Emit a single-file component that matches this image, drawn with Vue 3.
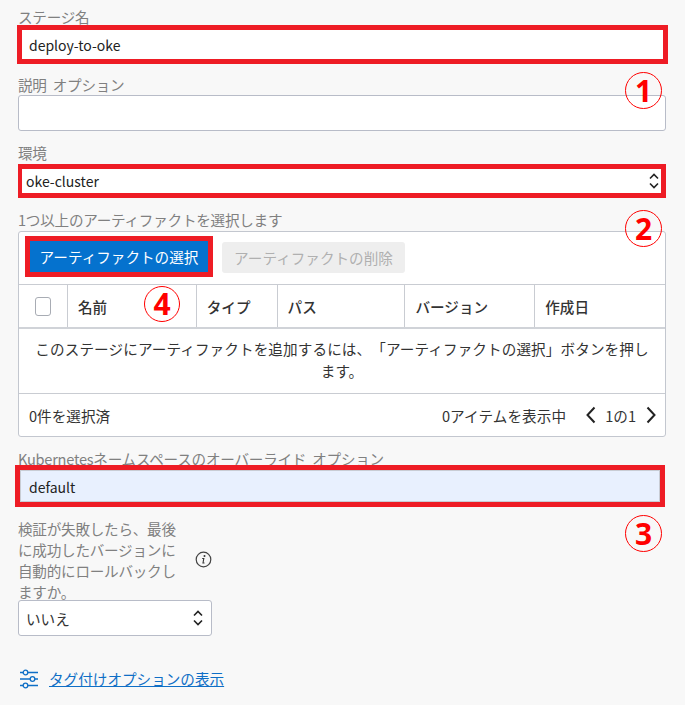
<script setup>
const columns = [
  { label: '名前', width: 129 },
  { label: 'タイプ', width: 81 },
  { label: 'パス', width: 128 },
  { label: 'バージョン', width: 130 },
  { label: '作成日', width: 131 },
]
</script>

<template>
  <main class="page">
    <div class="label">ステージ名</div>
    <div class="mark mark-name"><div class="value">deploy-to-oke</div></div>

    <div class="label l-desc">説明&nbsp; オプション</div>
    <div class="textarea"></div>
    <span class="num n1">1</span>

    <div class="label l-env">環境</div>
    <div class="mark mark-env">
      <div class="value env">oke-cluster</div>
      <svg class="updown" width="12" height="18" viewBox="0 0 12 18"><path d="M2 6.500 6 2.500l4 4M2 11.500l4 4 4-4" fill="none" stroke="#222" stroke-width="1.600"/></svg>
    </div>

    <div class="label l-art">1つ以上のアーティファクトを選択します</div>
    <section class="panel">
      <div class="toolbar">
        <div class="btn-mark"><button class="btn primary">アーティファクトの選択</button></div>
        <button class="btn disabled">アーティファクトの削除</button>
      </div>
      <div class="thead">
        <div class="th check"><span class="box"></span></div>
        <div v-for="c in columns" :key="c.label" class="th" :style="{ width: c.width + 'px' }">{{ c.label }}</div>
      </div>
      <div class="empty">このステージにアーティファクトを追加するには、「アーティファクトの選択」ボタンを押します。</div>
      <div class="foot">
        <span>0件を選択済</span>
        <div class="pager">
          <span class="count">0アイテムを表示中</span>
          <svg class="chev c1" width="12" height="18" viewBox="0 0 12 18"><path d="M9.500 1.500 2.500 9l7 7.500" fill="none" stroke="#222" stroke-width="2"/></svg>
          <span>1の1</span>
          <svg class="chev c2" width="12" height="18" viewBox="0 0 12 18"><path d="M2.500 1.500 9.500 9l-7 7.500" fill="none" stroke="#222" stroke-width="2"/></svg>
        </div>
      </div>
      <span class="num n4">4</span>
    </section>
    <span class="num n2">2</span>

    <div class="label l-k8s">Kubernetesネームスペースのオーバーライド&nbsp; オプション</div>
    <div class="mark mark-k8s"><div class="value auto">default</div></div>
    <span class="num n3">3</span>

    <div class="rollback">
      <div class="label multi">検証が失敗したら、最後に成功したバージョンに自動的にロールバックしますか。</div>
      <svg class="info" width="17" height="17" viewBox="0 0 17 17"><circle cx="8.500" cy="8.500" r="7.300" fill="none" stroke="#444" stroke-width="1.200"/><circle cx="9.500" cy="5" r="1" fill="#333"/><path d="M7.200 7.500h1.600l-.8 4.500h1.500" fill="none" stroke="#333" stroke-width="1.100"/></svg>
    </div>
    <div class="select">
      <span>いいえ</span>
      <svg width="12" height="18" viewBox="0 0 12 18"><path d="M2 6.500 6 2.500l4 4M2 11.500l4 4 4-4" fill="none" stroke="#222" stroke-width="1.600"/></svg>
    </div>

    <div class="tags">
      <svg width="20" height="20" viewBox="0 0 20 20" fill="none" stroke="#0f6fc6" stroke-width="1.300"><path d="M1 3.500h3M9 3.500h10M1 10h10M16 10h3M1 16.500h3M9 16.500h10"/><circle cx="6.500" cy="3.500" r="2.300"/><circle cx="13.500" cy="10" r="2.300"/><circle cx="6.500" cy="16.500" r="2.300"/></svg>
      <a class="link">タグ付けオプションの表示</a>
    </div>
  </main>
</template>

<style>
html, body { margin: 0; background: #f8f8f8; }
</style>

<style scoped>
.page {
  position: relative;
  box-sizing: border-box;
  width: 685px;
  height: 705px;
  padding: 8px 19px 0 18px;
  background: #f8f8f8;
  font-family: "Noto Sans CJK JP", "Noto Sans", sans-serif;
  font-size: 14.600px;
  text-spacing-trim: space-all;
  color: #333;
  overflow: hidden;
}
.label { height: 18px; line-height: 18px; color: #808080; white-space: nowrap; letter-spacing: -0.250px; }
.l-desc { margin-top: 12px; }
.l-env { margin-top: 13px; }
.l-art { margin-top: 13px; }
.l-k8s { margin-top: 13px; }
.mark { box-sizing: border-box; border: 5px solid #ee1c25; background: #fff; display: flex; align-items: center; position: relative; }
.mark-name { height: 39px; margin: -1px -2px 0 -1px; }
.mark-env { height: 34px; margin-top: 2px; justify-content: space-between; padding-right: 1px; border-left-width: 4px; }
.mark-k8s { height: 42px; margin: -3px 1px 0 -3px; background: #e8f0fe; box-shadow: inset 0 0 0 1px #c8ccd4; }
.value { padding-left: 7px; color: #222; font-size: 14px; }
.value.env { padding-left: 4px; }
.value.auto { padding-left: 9px; padding-top: 1px; }
.textarea { box-sizing: border-box; height: 36px; margin-top: 1px; background: #fff; border: 1px solid #b8bcc8; border-radius: 3px; }
.panel { position: relative; box-sizing: border-box; height: 206px; margin-top: 2px; background: #fff; border: 1px solid #c3c7cf; border-radius: 3px; }
.toolbar { display: flex; gap: 9px; height: 52px; box-sizing: border-box; padding: 4px 0 0 6px; align-items: flex-start; }
.btn-mark { border: 5px solid #ee1c25; display: flex; }
.btn { border: 0; height: 31px; padding: 0; font: inherit; display: flex; align-items: center; justify-content: center; }
.primary { width: 178px; background: #0572ce; color: #fff; }
.disabled { width: 183px; margin-top: 6px; background: #eee; color: #b0b0b0; border-radius: 3px; }
.thead { display: flex; height: 45px; box-sizing: border-box; border-top: 1px solid #c9ccd2; border-bottom: 2px solid #d0d3d8; }
.th { box-sizing: border-box; display: flex; align-items: center; padding-left: 10px; border-left: 1px solid #c9ccd2; font-weight: 500; color: #333; }
.th.check { width: 48px; border-left: 0; padding-left: 16px; }
.box { width: 16px; height: 19px; box-sizing: border-box; border: 1px solid #a8acb4; border-radius: 3px; background: #fff; }
.empty { box-sizing: border-box; height: 65px; padding: 9px 14px 0; text-align: center; line-height: 22px; letter-spacing: 0.100px; border-bottom: 1px solid #c9ccd2; color: #333; }
.foot { display: flex; justify-content: space-between; align-items: center; height: 42px; padding: 0 8px 0 10px; color: #333; }
.pager { display: flex; align-items: center; gap: 8px; }
.count { letter-spacing: 0.100px; }
.chev.c1 { margin-left: 11px; }
.chev.c2 { margin-left: 1px; }
.num {
  position: absolute;
  box-sizing: border-box;
  width: 37px;
  height: 37px;
  display: flex;
  align-items: center;
  justify-content: center;
  border: 1.200px solid #f00;
  border-radius: 50%;
  color: #f00;
  font: 700 30px/1 "Noto Sans", sans-serif;
}
.n1 { left: 625px; top: 72px; }
.n2 { left: 625px; top: 210px; }
.n3 { left: 625px; top: 515px; }
.n4 { left: 125px; top: 54px; width: 36px; height: 36px; }
.rollback { display: flex; align-items: center; margin-top: 11px; }
.multi { width: 160px; height: 84px; line-height: 21px; white-space: normal; }
.info { margin-left: 17px; margin-top: -1px; }
.select { box-sizing: border-box; width: 194px; height: 36px; margin-top: -2px; display: flex; align-items: center; justify-content: space-between; padding: 0 7px; background: #fff; border: 1px solid #b8bcc8; border-radius: 3px; color: #333; }
.tags { display: flex; align-items: center; gap: 10px; margin-top: 32px; margin-left: 1px; }
.link { color: #0f6fc6; text-decoration: underline; }
</style>
